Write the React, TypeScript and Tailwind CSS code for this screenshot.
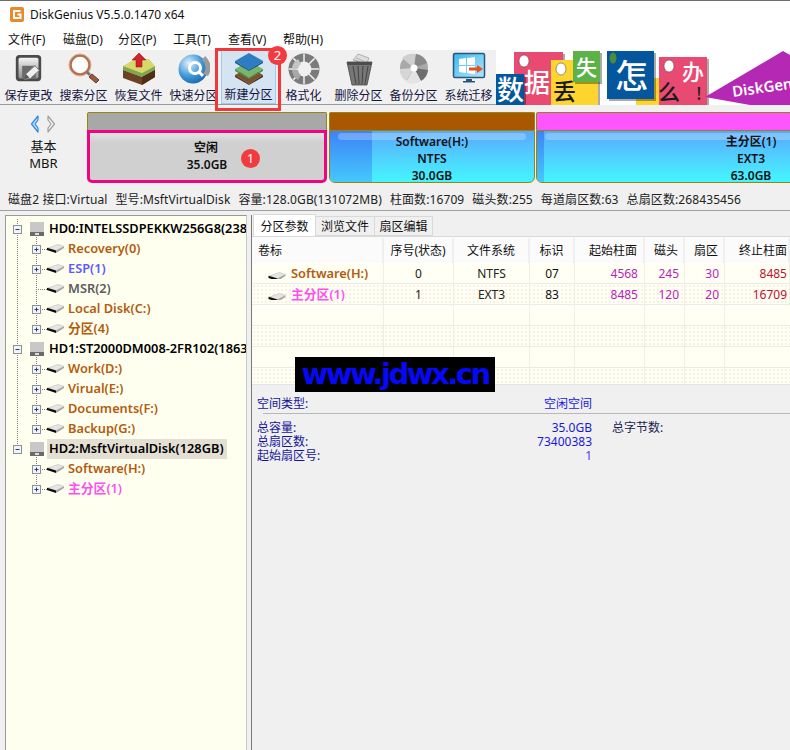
import type { ReactNode } from "react";

const labelColor = "text-[#14143c]";

const SaveIcon = () => (
  <svg width="29" height="31" viewBox="0 0 32 34">
    <defs>
      <linearGradient id="saveBg" x1="0" y1="0" x2="0" y2="1">
        <stop offset="0" stopColor="#f4f4f4" />
        <stop offset="1" stopColor="#8f8f8f" />
      </linearGradient>
    </defs>
    <rect x="2" y="2" width="28" height="29" rx="4" fill="#4a4a4a" />
    <rect x="5" y="5" width="22" height="23" rx="2" fill="url(#saveBg)" />
    <rect x="9" y="14" width="15" height="14" fill="#6a6a6a" />
    <path d="M11 29l2-6 10-9 5 5-10 9z" fill="#eee" stroke="#777" strokeWidth="1" />
    <path d="M11 29l2-6 4 4z" fill="#555" />
  </svg>
);

const SearchIcon = () => (
  <svg width="34" height="34" viewBox="0 0 34 34">
    <circle cx="13" cy="13" r="9.500" fill="#fff" stroke="#b5714e" strokeWidth="2.500" />
    <circle cx="13" cy="13" r="11" fill="none" stroke="#d9a98e" strokeWidth="1" />
    <path d="M20 20l3 3" stroke="#777" strokeWidth="3" />
    <path d="M22 25l3-3 7 6-3 3z" fill="#9c5a3c" stroke="#6d3c26" strokeWidth="1" />
  </svg>
);

const RecoverIcon = () => (
  <svg width="36" height="34" viewBox="0 0 36 34">
    <path d="M2 14l12-7h14l6 7-13 7z" fill="#d8d86a" />
    <path d="M2 14l19 7 13-7v4l-13 7-19-7z" fill="#7fa84a" />
    <path d="M2 18l19 7 13-7v7l-13 8-19-7z" fill="#6c4322" />
    <path d="M21 25l13-7v7l-13 8z" fill="#4e2f16" />
    <path d="M15 15V8h-4l7-7 7 7h-4v7z" fill="#d2222a" stroke="#8e1218" strokeWidth=".5" />
  </svg>
);

const QuickIcon = () => (
  <svg width="32" height="34" viewBox="0 0 32 34">
    <defs>
      <radialGradient id="quickDisc" cx=".35" cy=".3" r=".9">
        <stop offset="0" stopColor="#dff1fb" />
        <stop offset=".5" stopColor="#3f97d8" />
        <stop offset="1" stopColor="#0e4f96" />
      </radialGradient>
    </defs>
    <circle cx="15" cy="17" r="14.500" fill="url(#quickDisc)" />
    <circle cx="17" cy="16" r="5.500" fill="none" stroke="#fff" strokeWidth="3" />
    <path d="M20 19l5 5" stroke="#fff" strokeWidth="3" />
    <path d="M27 4a15 15 0 0 1 3 20l-5-2a10 10 0 0 0-1-14z" fill="#9a9a9a" />
  </svg>
);

const NewIcon = () => (
  <svg width="34" height="34" viewBox="0 0 34 34">
    <path d="M17 15l14 8-14 9-14-9z" fill="#7a5230" />
    <path d="M3 23l14 9 14-9v2l-14 8-14-8z" fill="#4f3018" />
    <path d="M17 9l14 8-14 9-14-9z" fill="#79b56d" />
    <path d="M3 17l14 9 14-9v2l-14 8-14-8z" fill="#4c8c4a" />
    <path d="M17 1l14 8-14 9-14-9z" fill="#2e7cc2" />
    <path d="M3 9l14 9 14-9v2l-14 8-14-8z" fill="#1a5a99" />
  </svg>
);

const FormatIcon = () => (
  <svg width="32" height="34" viewBox="0 0 32 34">
    <circle cx="16" cy="17" r="11.500" fill="none" stroke="#7b7b7b" strokeWidth="8" />
    <path d="M16 2v8M16 24v8M1 17h8M23 17h8M5.400 6.400l5.600 5.600M21 22l5.600 5.600M26.600 6.400L21 12M11 22l-5.600 5.600" stroke="#f0f0f0" strokeWidth="1.500" />
    <path d="M4 17a12 12 0 0 1 6-10l3 5a6 6 0 0 0-3 5z" fill="#c4c4c4" />
    <path d="M4 18a12 12 0 0 0 6 10l3-5a6 6 0 0 1-3-5z" fill="#a8a8a8" />
  </svg>
);

const DeleteIcon = () => (
  <svg width="30" height="34" viewBox="0 0 30 34">
    <path d="M9 8l5-6 11 4-3 7z" fill="#ddd" stroke="#999" strokeWidth=".7" />
    <path d="M12 6l8 3M11 8l8 3" stroke="#aaa" strokeWidth=".8" />
    <path d="M3 10h25l-5 23H8z" fill="#777" stroke="#444" strokeWidth=".8" />
    <path d="M3 10h25l-1 3H4z" fill="#4d4d4d" />
    <path d="M9 14l3 18M14 14l1 18M19 14l-1 18M24 14l-3 18" stroke="#444" strokeWidth="1" />
  </svg>
);

const BackupIcon = () => (
  <svg width="32" height="34" viewBox="0 0 32 34">
    <circle cx="16" cy="16" r="14" fill="#a9a9a9" />
    <path d="M16 16L4 6a16 16 0 0 1 14-4z" fill="#cfcfcf" />
    <path d="M16 16l2-14a14 14 0 0 1 11 9z" fill="#8a8a8a" />
    <path d="M16 16l14 2a14 14 0 0 1-7 11z" fill="#6e6e6e" />
    <path d="M16 16L8 30a14 14 0 0 0 15-1z" fill="#e4e4e4" />
    <path d="M16 16L2 17a14 14 0 0 0 6 12z" fill="#d6d6d6" />
    <circle cx="16" cy="16" r="3.500" fill="#fff" />
  </svg>
);

const MigrateIcon = () => (
  <svg width="34" height="34" viewBox="0 0 34 34">
    <defs>
      <linearGradient id="screen" x1="0" y1="0" x2="1" y2="1">
        <stop offset="0" stopColor="#39b7ec" />
        <stop offset="1" stopColor="#b5e6fa" />
      </linearGradient>
    </defs>
    <rect x="1.500" y="1.500" width="31" height="24" rx="1.500" fill="url(#screen)" stroke="#27577d" strokeWidth="1.500" />
    <path d="M7 7l7-1v7H7zM15 6l8-1v8h-8zM7 14h7v7l-7-1zM15 14h8v8l-8-1z" fill="#fff" />
    <path d="M14 27h6v2h3v1.500H11V29h3z" fill="#27577d" />
    <path d="M17 15.500h8V13l6 4-6 4v-2.500h-8z" fill="#e4521b" />
  </svg>
);

const tools: { label: string; icon: ReactNode; active?: boolean }[] = [
  { label: "保存更改", icon: <SaveIcon /> },
  { label: "搜索分区", icon: <SearchIcon /> },
  { label: "恢复文件", icon: <RecoverIcon /> },
  { label: "快速分区", icon: <QuickIcon /> },
  { label: "新建分区", icon: <NewIcon />, active: true },
  { label: "格式化", icon: <FormatIcon /> },
  { label: "删除分区", icon: <DeleteIcon /> },
  { label: "备份分区", icon: <BackupIcon /> },
  { label: "系统迁移", icon: <MigrateIcon /> },
];

const Tag = ({ x, y, w, h, fill, hole }: { x: number; y: number; w: number; h: number; fill: string; hole?: boolean }) => (
  <g>
    <rect x={x + 2} y={y + 2} width={w} height={h} fill="#00000055" />
    <rect x={x} y={y} width={w} height={h} fill={fill} />
    {hole && <ellipse cx={x + 10} cy={y + 9} rx="5" ry="6" fill="#fff" stroke="#555" strokeWidth=".6" />}
  </g>
);

const BannerChar = ({ x, y, size, fill, children }: { x: number; y: number; size: number; fill: string; children: string }) => (
  <text x={x} y={y} fontSize={size} fill={fill} fontFamily="'Noto Sans CJK SC', sans-serif" fontWeight="500">
    {children}
  </text>
);

const Banner = () => (
  <svg width="294" height="55" viewBox="0 0 294 55" className="shrink-0 bg-white">
    <Tag x={18} y={2} w={49} h={53} fill="#e84a72" hole />
    <Tag x={55} y={10} w={47} h={45} fill="#fdd52e" hole />
    <Tag x={77} y={1} w={27} h={31} fill="#5bb347" />
    <Tag x={140} y={28} w={47} h={27} fill="#fdd52e" />
    <Tag x={111} y={1} w={47} h={48} fill="#04579d" />
    <ellipse cx="117" cy="8" rx="3.500" ry="5.500" fill="#4c8c3a" />
    <Tag x={163} y={7} w={48} h={48} fill="#e84a72" hole />
    <Tag x={0} y={24} w={28} h={31} fill="#04579d" />
    <BannerChar x={1} y={50} size={27} fill="#fff">数</BannerChar>
    <BannerChar x={28} y={42} size={26} fill="#fff">据</BannerChar>
    <BannerChar x={57} y={50} size={23} fill="#1a1a1a">丢</BannerChar>
    <BannerChar x={80} y={25} size={21} fill="#fff">失</BannerChar>
    <BannerChar x={119} y={38} size={33} fill="#fff">怎</BannerChar>
    <BannerChar x={162} y={50} size={22} fill="#1a1a1a">么</BannerChar>
    <BannerChar x={186} y={30} size={22} fill="#fff">办</BannerChar>
    <BannerChar x={200} y={50} size={17} fill="#1a1a1a">!</BannerChar>
    <path d="M209 47L287 1l7 4v50h-40z" fill="#b528b4" />
    <text x="237" y="47" fontSize="15" fontWeight="600" fill="#fff" transform="rotate(-8 237 47)" fontFamily="'Noto Sans', sans-serif">
      DiskGen
    </text>
  </svg>
);

const Badge = ({ n, className }: { n: number; className: string }) => (
  <span className={`absolute flex h-[19px] w-[19px] items-center justify-center rounded-full bg-[#f23b3f] text-[13px] text-white ${className}`}>
    {n}
  </span>
);

const Partition = ({
  w,
  header,
  lines,
  edge,
  textLeft,
}: {
  w: string;
  header: string;
  lines: string[];
  edge: string;
  textLeft: string;
}) => (
  <div className={`flex h-[71px] shrink-0 flex-col ${w}`}>
    <div className={`h-[18px] shrink-0 rounded-t-[2px] border border-b-0 border-[#96860c] ${header}`} />
    <div className="relative flex flex-1 overflow-hidden rounded-b-[6px] border border-t-[#96860c] border-[#96860c] bg-gradient-to-b from-[#58a8fc] to-[#42f6ff]">
      <div className={`shrink-0 bg-gradient-to-b from-[#3f82f6] to-[#46c8fc] ${edge}`} />
      <div className="absolute inset-x-[8px] top-[2px] h-[7px] rounded-full bg-white/25" />
      <div className={`relative flex flex-1 flex-col items-center pt-[2px] text-[12px] font-semibold leading-[17px] text-[#111] ${textLeft}`}>
        {lines.map((l) => (
          <span key={l}>{l}</span>
        ))}
      </div>
    </div>
  </div>
);

const DriveGlyph = ({ x }: { x: number }) => (
  <g transform={`translate(${x} 4)`}>
    <path d="M1 5L11 1.500 17 3.500 9 7.500z" fill="#e6e6e6" stroke="#b0b0b0" strokeWidth=".5" />
    <path d="M0 4.800L9 7.500V10L0 7z" fill="#0c0c0c" />
    <path d="M9 7.500L17 3.500V5L9 10z" fill="#a4a4a4" />
  </g>
);

const Expander = ({ cx, open }: { cx: number; open?: boolean }) => (
  <g>
    <rect x={cx - 3.500} y="6.500" width="8" height="8" fill="#f4f4f8" stroke="#8a8f9c" />
    <path d={`M${cx - 1.500} 10.500h4`} stroke="#24407a" />
    {!open && <path d={`M${cx + 0.500} 8.500v4`} stroke="#24407a" />}
  </g>
);

const dots = { stroke: "#808080", strokeDasharray: "1 1" };

const DiskRow = ({ label, last, selected }: { label: string; last?: boolean; selected?: boolean }) => (
  <div className="flex h-5 items-center whitespace-nowrap">
    <svg width="41" height="20" className="shrink-0">
      <line x1="11.500" y1="0" x2="11.500" y2={last ? 10 : 20} {...dots} />
      <line x1="30.500" y1="14" x2="30.500" y2="20" {...dots} />
      <Expander cx={11} open />
      <rect x="24" y="3" width="14" height="10" fill="#c8c8c8" />
      <rect x="24" y="13" width="14" height="4" fill="#6a6a6a" />
      <rect x="29" y="14" width="4" height="2" fill="#ddd" />
    </svg>
    <span className={`flex h-5 items-center pl-[2px] pr-[3px] text-[12.8px] font-semibold text-black ${selected ? "bg-[#e3dfd3]" : ""}`}>{label}</span>
  </div>
);

const PartRow = ({
  label,
  color,
  leaf,
  end,
  outer,
}: {
  label: string;
  color: string;
  leaf?: boolean;
  end?: boolean;
  outer?: boolean;
}) => (
  <div className="flex h-5 items-center whitespace-nowrap">
    <svg width="60" height="20" className="shrink-0">
      {outer && <line x1="11.500" y1="0" x2="11.500" y2="20" {...dots} />}
      <line x1="30.500" y1="0" x2="30.500" y2={end ? 10 : 20} {...dots} />
      <line x1="30" y1="10.500" x2="42" y2="10.500" {...dots} />
      {!leaf && <Expander cx={30} />}
      <DriveGlyph x={41} />
    </svg>
    <span className={`pl-[2px] text-[12.8px] font-semibold ${color}`}>{label}</span>
  </div>
);

const brown = "text-[#b35c10]";
const columns = [
  { label: "卷标", w: "w-[132px]", align: "text-left pl-[6px]" },
  { label: "序号(状态)", w: "w-[70px]", align: "text-center" },
  { label: "文件系统", w: "w-[76px]", align: "text-center" },
  { label: "标识", w: "w-[45px]", align: "text-center" },
  { label: "起始柱面", w: "w-[70px]", align: "text-right pr-[6px]" },
  { label: "磁头", w: "w-[40px]", align: "text-right pr-[5px]" },
  { label: "扇区", w: "w-[40px]", align: "text-right pr-[5px]" },
  { label: "终止柱面", w: "w-[65px]", align: "text-right pr-[1px]" },
];

const rows = [
  { name: "Software(H:)", color: brown, cells: ["0", "NTFS", "07", "4568", "245", "30", "8485"] },
  { name: "主分区(1)", color: "text-[#ff50ee]", cells: ["1", "EXT3", "83", "8485", "120", "20", "16709"] },
];

const cellColor = ["text-[#222]", "text-[#222]", "text-[#111]", "text-[#b81eb8]", "text-[#b81eb8]", "text-[#b81eb8]", "text-[#c01030]"];
const cellAlign = ["w-[70px] text-center", "w-[76px] text-center", "w-[45px] text-center", "w-[70px] text-right pr-[6px]", "w-[40px] text-right pr-[5px]", "w-[40px] text-right pr-[5px]", "w-[65px] text-right pr-[2px]"];
const dotted = "bg-[radial-gradient(#f3dcdc_0.6px,transparent_0.8px)] bg-[length:4px_4px]";

export default function App() {
  return (
    <div className="relative h-[750px] w-[790px] overflow-hidden bg-[#f0f0f0] font-['Noto_Sans','Noto_Sans_CJK_SC',sans-serif] text-[12px] text-[#111]">
      {/* title + menu */}
      <div className="border-t border-[#6e6e6e] bg-white">
        <div className="flex h-[26px] items-center gap-[6px] pl-[10px]">
          <svg width="14" height="15" viewBox="0 0 14 15">
            <rect width="14" height="15" rx="2" fill="#e8892a" />
            <path d="M10.500 4H4v7h6.500V7.500H7.500" fill="none" stroke="#fff" strokeWidth="2" />
          </svg>
          <span className="pt-[1px]">DiskGenius V5.5.0.1470 x64</span>
        </div>
        <div className="flex h-[23px] items-center pl-[8px] pt-[3px]">
          {["文件(F)", "磁盘(D)", "分区(P)", "工具(T)", "查看(V)", "帮助(H)"].map((m) => (
            <span key={m} className="w-[55px]">{m}</span>
          ))}
        </div>
      </div>

      {/* toolbar */}
      <div className="flex h-[55px] justify-between border-b border-[#9a9a9a] pl-[1px]">
        <div className="flex">
          {tools.map((t) => (
            <div
              key={t.label}
              className={`flex w-[55px] flex-col items-center ${t.active ? "border border-[#a8c8e8] bg-[#d5e4f3]" : ""}`}
            >
              <div className="flex h-[37px] items-center justify-center">{t.icon}</div>
              <span className={`whitespace-nowrap pt-[1px] leading-[16px] ${labelColor}`}>{t.label}</span>
            </div>
          ))}
        </div>
        <Banner />
      </div>

      {/* disk map */}
      <div className="flex h-[85px] pt-[7px]">
        <div className="flex w-[87px] shrink-0 flex-col items-center">
          <svg width="26" height="18" viewBox="0 0 26 18" className="mr-[1px] mt-[3px]">
            <path d="M8 1L1.500 9 8 17V13L5 9l3-4z" fill="#bfe0fb" stroke="#2f86e0" strokeWidth="1.200" strokeLinejoin="round" />
            <path d="M18 1l6.500 8L18 17V13l3-4-3-4z" fill="#f0f0f0" stroke="#a0a0a0" strokeWidth="1.200" strokeLinejoin="round" />
          </svg>
          <span className="mt-[5px] text-[13px] leading-[17px]">基本</span>
          <span className="text-[13px] leading-[17px]">MBR</span>
        </div>
        <div className="flex gap-[2px]">
          <div className="flex h-[71px] w-[240px] shrink-0 flex-col">
            <div className="h-[18px] rounded-t-[2px] border border-b-0 border-[#96860c] bg-[#a8a8a8]" />
            <div className="flex flex-1 flex-col items-center rounded-b-[5px] border-[3px] border-[#f0047f] bg-gradient-to-b from-[#e4e4e4] to-[#d0d0d0] to-20% pt-[6px] text-[12px] font-semibold leading-[17px]">
              <span className="pr-[2px]">空闲</span>
              <span>35.0GB</span>
            </div>
          </div>
          <Partition w="w-[206px]" header="bg-[#a85800]" edge="w-[42px]" textLeft="pr-[42px]" lines={["Software(H:)", "NTFS", "30.0GB"]} />
          <Partition w="w-[430px] -ml-[1px]" header="bg-[#ff55ff]" edge="w-[7px]" textLeft="pr-[7px]" lines={["主分区(1)", "EXT3", "63.0GB"]} />
        </div>
      </div>

      {/* disk info */}
      <div className="flex h-[20px] items-center gap-[8px] whitespace-nowrap pl-[8px] tracking-[0.1px] text-[#222]">
        <span>磁盘2 接口:Virtual</span>
        <span>型号:MsftVirtualDisk</span>
        <span>容量:128.0GB(131072MB)</span>
        <span>柱面数:16709</span>
        <span>磁头数:255</span>
        <span>每道扇区数:63</span>
        <span>总扇区数:268435456</span>
      </div>

      {/* main panes */}
      <div className="flex h-[540px] border-t border-[#a0a0a0] pt-[4px]">
        <div className="ml-[5px] w-[242px] shrink-0 overflow-hidden border-l border-t border-r border-l-[#9a9a9a] border-t-[#9a9a9a] border-r-[#c8c8c8] bg-[#ffffef] pt-[3px]">
          <DiskRow label="HD0:INTELSSDPEKKW256G8(238" />
          <PartRow label="Recovery(0)" color={brown} outer />
          <PartRow label="ESP(1)" color="text-[#5a5aff]" outer />
          <PartRow label="MSR(2)" color="text-[#5c5c5c]" leaf outer />
          <PartRow label="Local Disk(C:)" color={brown} outer />
          <PartRow label="分区(4)" color={brown} end outer />
          <DiskRow label="HD1:ST2000DM008-2FR102(1863" />
          <PartRow label="Work(D:)" color={brown} outer />
          <PartRow label="Virual(E:)" color={brown} outer />
          <PartRow label="Documents(F:)" color={brown} outer />
          <PartRow label="Backup(G:)" color={brown} end outer />
          <DiskRow label="HD2:MsftVirtualDisk(128GB)" last selected />
          <PartRow label="Software(H:)" color={brown} />
          <PartRow label="主分区(1)" color="text-[#ff50ee]" end />
        </div>

        <div className="ml-[4px] flex min-w-0 flex-1 flex-col border-l border-[#7a7a7a]">
          {/* tabs */}
          <div className="flex h-[22px] shrink-0 items-end border-b border-[#d9d9d9] pl-[1px]">
            <span className="flex h-[22px] w-[63px] items-center justify-center border border-b-0 border-[#d9d9d9] bg-white pt-[2px]">分区参数</span>
            <span className="flex h-[20px] w-[59px] items-center justify-center border-y border-r border-[#d9d9d9] bg-[#f0f0f0] pt-[1px]">浏览文件</span>
            <span className="flex h-[20px] w-[58px] items-center justify-center border-y border-r border-[#d9d9d9] bg-[#f0f0f0] pt-[1px]">扇区编辑</span>
          </div>

          {/* partition table */}
          <div className="h-[147px] shrink-0 overflow-hidden bg-[#fffff4]">
            <div className="flex h-[26px] whitespace-nowrap bg-[#fbfbfb] pt-[1px] leading-[26px]">
              {columns.map((c) => (
                <span key={c.label} className={`shrink-0 border-r-2 border-[#efefef] ${c.w} ${c.align}`}>{c.label}</span>
              ))}
            </div>
            {rows.map((r, i) => (
              <div key={r.name} className={`flex h-[21px] items-center border-b border-[#ebebeb] ${i === 1 ? dotted : ""}`}>
                <div className="flex h-full w-[132px] shrink-0 items-center border-r border-[#efefe6] pl-[16px]">
                  <svg width="18" height="12" viewBox="0 0 17 12" className="shrink-0">
                    <DriveGlyph x={0} />
                  </svg>
                  <span className={`pl-[5px] text-[12.8px] font-semibold leading-none ${r.color}`}>{r.name}</span>
                </div>
                {r.cells.map((c, j) => (
                  <span key={j} className={`flex-none border-r border-[#efefe6] pt-[1px] leading-[20px] ${cellAlign[j]} ${cellColor[j]}`}>{c}</span>
                ))}
              </div>
            ))}
            {[0, 1, 2, 3].map((i) => (
              <div key={i} className={`flex h-[21px] border-b border-[#ebebe0] ${i % 2 === 1 ? dotted : ""}`}>
                {[132, 70, 76, 45, 70, 40, 40].map((w, j) => (
                  <div key={j} style={{ width: w }} className="shrink-0 border-r border-[#efefe6]" />
                ))}
              </div>
            ))}
          </div>

          {/* details */}
          <div className="flex-1 border-t border-[#e4e4e4] bg-[#f0f0f0] pl-[5px] pt-[10px] text-[#14149a]">
            <div className="flex h-[17px] items-center">
              <span className="w-[210px]">空间类型:</span>
              <span className="w-[125px] text-right text-[#1818e0]">空闲空间</span>
            </div>
            <div className="ml-[6px] mt-[1px] border-t border-[#b8b8b8]" />
            <div className="mt-[7px] flex leading-[14px]">
              <div className="flex w-[335px] flex-col">
                <div className="flex h-[14px] justify-between"><span>总容量:</span><span className="text-[#1818e0]">35.0GB</span></div>
                <div className="flex h-[14px] justify-between"><span>总扇区数:</span><span className="text-[#1818e0]">73400383</span></div>
                <div className="flex h-[14px] justify-between"><span>起始扇区号:</span><span className="text-[#5a3cf0]">1</span></div>
              </div>
              <span className="ml-[20px] text-[#222250]">总字节数:</span>
            </div>
          </div>
        </div>
      </div>

      {/* callouts over the UI */}
      <div className="absolute left-[215px] top-[48px] h-[63px] w-[66px] border-[3px] border-[#f0383c]" />
      <Badge n={2} className="left-[268px] top-[46px]" />
      <Badge n={1} className="left-[241px] top-[149px]" />
      <div className="absolute left-[295px] top-[357px] flex h-[35px] w-[200px] items-center justify-center overflow-hidden bg-black font-['DejaVu_Sans',sans-serif] text-[29px] font-bold tracking-[-2.500px] text-[#0808f8]">
        www.jdwx.cn
      </div>
    </div>
  );
}
